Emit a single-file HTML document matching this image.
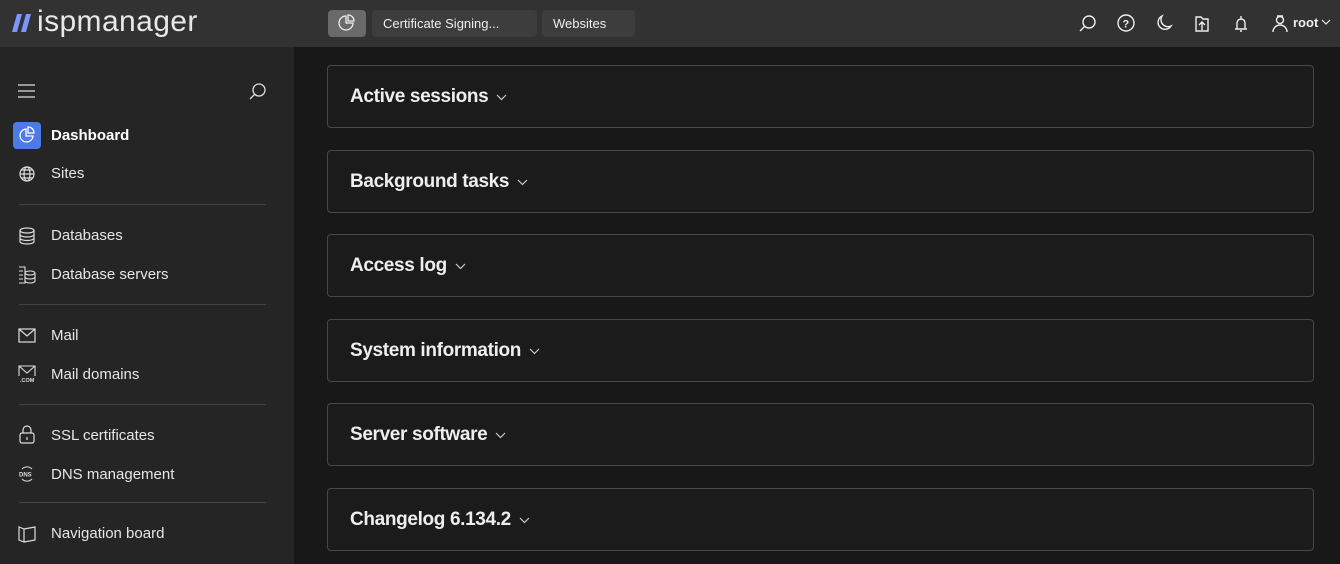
<!DOCTYPE html>
<html><head><meta charset="utf-8"><style>
*{margin:0;padding:0;box-sizing:border-box}
body{width:1340px;height:564px;overflow:hidden;background:#181818;font-family:"Liberation Sans",sans-serif;color:#eee;position:relative}
.hdr{position:absolute;left:0;top:0;width:1340px;height:47px;background:#323232}
.logo{position:absolute;left:37px;top:5px;font-size:30px;color:#e8e8e8;letter-spacing:0.4px}
.tab{position:absolute;top:10px;height:27px;background:#3d3d3d;border-radius:4px;font-size:13px;line-height:27px;padding-left:11px;color:#eee}
.side{position:absolute;left:0;top:47px;width:294px;height:517px;background:#252525}
.item{position:absolute;left:51px;font-size:15px;color:#e6e6e6}
.ic{position:absolute;left:18px}
.sep{position:absolute;left:19px;width:247px;height:1px;background:#444}
.card{position:absolute;left:327px;width:987px;height:63px;border:1px solid #474747;border-radius:4px;background:#1b1b1b}
.card span{position:absolute;left:22px;top:20px;font-size:19px;letter-spacing:-0.35px;font-weight:bold;color:#eee;display:flex;align-items:center}
.card span svg{margin-left:8px}
svg{display:block}
</style></head><body>
<div class="hdr">
 <svg style="position:absolute;left:12px;top:14px" width="22" height="18"><path d="M5 0h5l-5 18H0zM14 0h5l-5 18H9z" fill="#7b97ff"/></svg>
 <div class="logo">ispmanager</div>
 <div class="tab" style="left:328px;width:38px;background:#6a6a6a;padding:0">
  <svg width="38" height="27" viewBox="0 0 38 27"><path d="M18 6a7 7 0 1 0 7 7h-7z" fill="none" stroke="#eee" stroke-width="1.3"/><path d="M20 5v6h6a6 6 0 0 0-6-6z" fill="none" stroke="#eee" stroke-width="1.3"/></svg></div>
 <div class="tab" style="left:372px;width:165px">Certificate Signing...</div>
 <div class="tab" style="left:542px;width:93px">Websites</div>
 <svg style="position:absolute;left:1070px;top:10px" width="270" height="27" viewBox="0 0 270 27" fill="none" stroke="#eee" stroke-width="1.4">
  <circle cx="19" cy="12" r="6"/><path d="M15 16l-5 5"/>
  <circle cx="56" cy="13" r="8"/><text x="52.5" y="17.5" font-size="11" fill="#eee" stroke="none" font-weight="bold" font-family="Liberation Sans">?</text>
  <path d="M92 6a7 7 0 1 0 9 10a7 7 0 0 1-9-10z"/>
  <path d="M126 7h5l2 2h5v12h-12z"/><path d="M132 20v-7M129 15l3-3 3 3"/>
  <path d="M165 19h12M167 19v-6a4 4 0 0 1 8 0v6M170 21h2M171 6v3"/>
  <circle cx="210" cy="10" r="3.5"/><path d="M203 22a7 7 0 0 1 14 0M207 6h6"/>
 </svg>
 <div style="position:absolute;left:1293px;top:15px;font-size:13px;font-weight:bold">root</div>
 <svg style="position:absolute;left:1321px;top:19px" width="10" height="7"><path d="M1 1l4 4 4-4" fill="none" stroke="#eee" stroke-width="1.2"/></svg>
</div>
<div class="side">
 <svg class="ic" style="top:37px" width="18" height="14"><path d="M0 1h17M0 7h17M0 13h17" stroke="#ddd" stroke-width="1.2"/></svg>
 <svg style="position:absolute;left:248px;top:35px" width="20" height="20" fill="none" stroke="#ddd" stroke-width="1.3"><circle cx="11" cy="8" r="6"/><path d="M7 12l-5 5"/></svg>
 <div style="position:absolute;left:13px;top:75px;width:28px;height:27px;background:#4c7be8;border-radius:4px"><svg width="28" height="27"><path d="M13 7a6.5 6.5 0 1 0 7 7h-7z" fill="none" stroke="#fff" stroke-width="1.3"/><path d="M15 5v6h6a6 6 0 0 0-6-6z" fill="none" stroke="#fff" stroke-width="1.3"/></svg></div>
 <div class="item" style="top:80px;font-weight:bold;color:#fff">Dashboard</div>
 <svg class="ic" style="top:118px" width="18" height="18" fill="none" stroke="#ddd" stroke-width="1.2"><circle cx="9" cy="9" r="7"/><ellipse cx="9" cy="9" rx="3" ry="7"/><path d="M2 9h14M3 5h12M3 13h12"/></svg>
 <div class="item" style="top:118px">Sites</div>
 <div class="sep" style="top:157px"></div>
 <svg class="ic" style="top:180px" width="18" height="18" fill="none" stroke="#ddd" stroke-width="1.2"><ellipse cx="9" cy="3.5" rx="7" ry="2.5"/><path d="M2 3.5v11c0 1.5 3 2.5 7 2.5s7-1 7-2.5v-11M2 7.5c0 1.5 3 2.5 7 2.5s7-1 7-2.5M2 11c0 1.5 3 2.5 7 2.5s7-1 7-2.5"/></svg>
 <div class="item" style="top:180px">Databases</div>
 <svg class="ic" style="top:219px" width="18" height="18" fill="none" stroke="#ddd" stroke-width="1.1"><path d="M1 1h6v16H1M1 5h4M1 9h4M1 13h4"/><ellipse cx="12" cy="7" rx="5" ry="2"/><path d="M7 7v8c0 1 2 2 5 2s5-1 5-2V7M7 11c0 1 2 2 5 2s5-1 5-2"/></svg>
 <div class="item" style="top:219px">Database servers</div>
 <div class="sep" style="top:257px"></div>
 <svg class="ic" style="top:281px" width="18" height="15" fill="none" stroke="#ddd" stroke-width="1.2"><rect x="1" y="1" width="16" height="13"/><path d="M1 1l8 7 8-7"/></svg>
 <div class="item" style="top:280px">Mail</div>
 <svg class="ic" style="top:318px" width="18" height="18" fill="none" stroke="#ddd" stroke-width="1.1"><path d="M1 11V1h16v10M1 1l8 7 8-7"/><text x="2" y="17" font-size="5.5" fill="#ddd" stroke="none" font-family="Liberation Sans" font-weight="bold">.COM</text></svg>
 <div class="item" style="top:319px">Mail domains</div>
 <div class="sep" style="top:357px"></div>
 <svg class="ic" style="top:378px" width="18" height="20" fill="none" stroke="#ddd" stroke-width="1.2"><rect x="2" y="8" width="14" height="10" rx="2"/><path d="M5 8V5a4 4 0 0 1 8 0v3M9 12v3"/></svg>
 <div class="item" style="top:380px">SSL certificates</div>
 <svg class="ic" style="top:418px" width="18" height="18" fill="none" stroke="#ddd" stroke-width="1"><path d="M4 4a7 7 0 0 1 10 0M4 14a7 7 0 0 0 10 0"/><text x="1" y="11.5" font-size="6" fill="#ddd" stroke="none" font-family="Liberation Sans" font-weight="bold">DNS</text></svg>
 <div class="item" style="top:419px">DNS management</div>
 <div class="sep" style="top:455px"></div>
 <svg class="ic" style="top:478px" width="18" height="18" fill="none" stroke="#ddd" stroke-width="1.2"><path d="M1 2l5 2v13l-5-2zM6 4l11-2v13l-11 2"/></svg>
 <div class="item" style="top:478px">Navigation board</div>
</div>
<div class="card" style="top:65px"><span>Active sessions<svg width="11" height="7"><path d="M1 1l4.5 4.5L10 1" fill="none" stroke="#ccc" stroke-width="1.2"/></svg></span></div>
<div class="card" style="top:150px"><span>Background tasks<svg width="11" height="7"><path d="M1 1l4.5 4.5L10 1" fill="none" stroke="#ccc" stroke-width="1.2"/></svg></span></div>
<div class="card" style="top:234px"><span>Access log<svg width="11" height="7"><path d="M1 1l4.5 4.5L10 1" fill="none" stroke="#ccc" stroke-width="1.2"/></svg></span></div>
<div class="card" style="top:319px"><span>System information<svg width="11" height="7"><path d="M1 1l4.5 4.5L10 1" fill="none" stroke="#ccc" stroke-width="1.2"/></svg></span></div>
<div class="card" style="top:403px"><span>Server software<svg width="11" height="7"><path d="M1 1l4.5 4.5L10 1" fill="none" stroke="#ccc" stroke-width="1.2"/></svg></span></div>
<div class="card" style="top:488px"><span>Changelog 6.134.2<svg width="11" height="7"><path d="M1 1l4.5 4.5L10 1" fill="none" stroke="#ccc" stroke-width="1.2"/></svg></span></div>
</body></html>
